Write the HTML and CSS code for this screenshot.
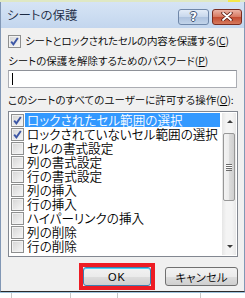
FILE: index.html
```html
<!DOCTYPE html>
<html lang="ja">
<head>
    <meta charset="UTF-8">
    <title>シートの保護</title>
    <link rel="stylesheet" href="styles.css">
</head>
<body>
    <div class="sheet-top"><span class="cell-yellow"></span></div>

    <div class="dialog">
        <div class="titlebar">
            <span class="title">シートの保護</span>
            <div class="caption-btns">
                <span class="cap help">?</span>
                <span class="cap close">
                    <svg width="12" height="9" viewBox="0 0 12 9">
                        <path d="M2 1 L10 8 M10 1 L2 8" stroke="#5a1a10" stroke-width="3.4" stroke-linecap="round"/>
                        <path d="M2 1 L10 8 M10 1 L2 8" stroke="#fff" stroke-width="1.8" stroke-linecap="round"/>
                    </svg>
                </span>
            </div>
        </div>

        <div class="content">
            <div class="check-row">
                <span class="cb checked"><svg viewBox="0 0 11 11"><path d="M2.2 5.6 L4.4 8.4 L8.8 2" stroke="#3d57a6" stroke-width="1.9" fill="none"/></svg></span>
                <span>シートとロックされたセルの内容を保護する(<u>C</u>)</span>
            </div>

            <div class="label">シートの保護を解除するためのパスワード(<u>P</u>)</div>
            <div class="textbox"><span class="caret"></span></div>

            <div class="label">このシートのすべてのユーザーに許可する操作(<u>O</u>):</div>
            <div class="listbox">
                <ul class="items">
                    <li class="selected"><span class="cb checked"><svg viewBox="0 0 11 11"><path d="M2.2 5.6 L4.4 8.4 L8.8 2" stroke="#3d57a6" stroke-width="1.9" fill="none"/></svg></span><span class="text">ロックされたセル範囲の選択</span></li>
                    <li><span class="cb checked"><svg viewBox="0 0 11 11"><path d="M2.2 5.6 L4.4 8.4 L8.8 2" stroke="#3d57a6" stroke-width="1.9" fill="none"/></svg></span><span class="text">ロックされていないセル範囲の選択</span></li>
                    <li><span class="cb"></span><span class="text">セルの書式設定</span></li>
                    <li><span class="cb"></span><span class="text">列の書式設定</span></li>
                    <li><span class="cb"></span><span class="text">行の書式設定</span></li>
                    <li><span class="cb"></span><span class="text">列の挿入</span></li>
                    <li><span class="cb"></span><span class="text">行の挿入</span></li>
                    <li><span class="cb"></span><span class="text">ハイパーリンクの挿入</span></li>
                    <li><span class="cb"></span><span class="text">列の削除</span></li>
                    <li><span class="cb"></span><span class="text">行の削除</span></li>
                </ul>
                <div class="scrollbar">
                    <div class="arrow up"></div>
                    <div class="track">
                        <div class="thumb"><span class="grip"></span></div>
                    </div>
                    <div class="arrow down"></div>
                </div>
            </div>

            <div class="buttons">
                <div class="highlight-box"><span class="btn default">OK</span></div>
                <span class="btn">キャンセル</span>
            </div>
        </div>
    </div>

    <div class="sheet-bottom"></div>
</body>
</html>
```

FILE: styles.css
```css
body {
    margin: 0;
    width: 245px;
    height: 298px;
    overflow: hidden;
    background-color: #fff;
    font-family: "Noto Sans CJK JP", sans-serif;
    font-size: 10.5px;
    font-weight: 350;
    font-feature-settings: "palt";
    color: #000;
    white-space: nowrap;
}
/* spreadsheet showing behind the dialog */
.sheet-top {
    height: 2px;
    background: #dfe8c4;
    position: relative;
}
.cell-yellow {
    position: absolute;
    left: 228px;
    top: 0;
    width: 12px;
    height: 2px;
    background: #f4e84a;
}
.sheet-bottom {
    height: 6px;
    border-top: 1px solid #9ec3dc;
    background: linear-gradient(90deg, transparent 11px, #c8c8c8 11px, #c8c8c8 12px, transparent 12px,
        transparent 70px, #c8c8c8 70px, #c8c8c8 71px, transparent 71px,
        transparent 117px, #c8c8c8 117px, #c8c8c8 118px, transparent 118px,
        transparent 200px, #c8c8c8 200px, #c8c8c8 201px, transparent 201px);
}
/* Dialog frame */
.dialog {
    width: 243px;
    height: 289px;
    border-left: 1px solid #8197b5;
    border-right: 1px solid #8197b5;
    border-bottom: 1px solid #2a2a2a;
    background-color: #f0f0f0;
    display: flex;
    flex-direction: column;
}
.titlebar {
    height: 26px;
    flex: none;
    display: flex;
    align-items: center;
    justify-content: space-between;
    background: linear-gradient(#d6e4f5, #c3d6ee);
    padding: 0 2px 0 6px;
}
.title {
    font-size: 12.5px;
    color: #1b2b44;
    margin-top: -1px;
}
.caption-btns {
    display: flex;
    gap: 3px;
    margin-top: 3px;
}
.cap {
    height: 14px;
    border-radius: 3px;
    display: flex;
    align-items: center;
    justify-content: center;
}
.help {
    width: 29px;
    border: 1px solid #6f87a9;
    background: linear-gradient(#e3ecf7, #c7d7ec 50%, #adc2de 51%, #c2d4ea);
    color: #fff;
    font-family: "DejaVu Sans", sans-serif;
    font-weight: bold;
    font-size: 12px;
    text-shadow: 1px 0 #3d5473, -1px 0 #3d5473, 0 1px #3d5473, 0 -1px #3d5473;
}
.close {
    width: 28px;
    border: 1px solid #7b2c1f;
    background: linear-gradient(#ebb3a5, #d7775f 50%, #c24a30 51%, #d67a5d);
}
/* Dialog body */
.content {
    padding: 6px 6px 0 7px;
    display: flex;
    flex-direction: column;
}
.check-row {
    display: flex;
    align-items: center;
    gap: 4px;
    height: 14px;
    line-height: 14px;
    letter-spacing: -0.25px;
}
.cb {
    width: 11px;
    height: 11px;
    flex: none;
    border: 1px solid #8e8f8f;
    background: linear-gradient(135deg, #d4d4d4, #f8f8f8);
    box-shadow: inset 0 0 0 1px #f2f2f2;
    display: flex;
}
.cb svg {
    width: 11px;
    height: 11px;
}
.label {
    margin-top: 6px;
    height: 14px;
    line-height: 14px;
}
.textbox {
    margin-top: 2px;
    width: 227px;
    height: 16px;
    border: 1px solid #abadb3;
    border-top-color: #8e9198;
    background: #fff;
    position: relative;
}
.caret {
    position: absolute;
    left: 3px;
    top: 2px;
    width: 1px;
    height: 12px;
    background: #000;
}
.textbox + .label {
    margin-top: 5px;
}
/* List of permissions */
.listbox {
    margin-top: 4px;
    width: 228px;
    height: 144px;
    border: 1px solid #828790;
    background: #fff;
    display: flex;
}
.items {
    list-style: none;
    margin: 0;
    padding: 1px 0 0 0;
    flex: 1;
    font-size: 12.6px;
}
.items li {
    height: 14px;
    line-height: 14px;
    display: flex;
    align-items: center;
    padding-left: 2px;
}
.items .text {
    margin-left: 1px;
    padding: 0 2px;
    height: 14px;
    flex: 1;
}
.items li.selected .text {
    background: #3399ff;
    color: #fff;
}
.scrollbar {
    width: 16px;
    margin: 1px 1px 1px 2px;
    background: linear-gradient(90deg, #e6e6e6, #f4f4f4 30%, #f4f4f4 70%, #e8e8e8);
    display: flex;
    flex-direction: column;
}
.arrow {
    height: 17px;
    position: relative;
}
.arrow::after {
    content: "";
    position: absolute;
    left: 5px;
    border-left: 3.5px solid transparent;
    border-right: 3.5px solid transparent;
}
.arrow.up::after {
    top: 7px;
    border-bottom: 3px solid #3c3c3c;
}
.arrow.down::after {
    top: 7px;
    border-top: 3px solid #3c3c3c;
}
.track {
    flex: 1;
    padding: 3px 1px 0 1px;
}
.thumb {
    height: 66px;
    border: 1px solid #979797;
    border-radius: 2px;
    background: linear-gradient(90deg, #f3f3f3, #ececec 50%, #dcdcdc 51%, #cfcfcf);
    display: flex;
    align-items: center;
    justify-content: center;
}
.grip {
    width: 6px;
    height: 5px;
    border-top: 1px solid #6b6b6b;
    border-bottom: 1px solid #6b6b6b;
    background: linear-gradient(#fff 0 1px, #6b6b6b 1px 2px, #fff 2px 3px, #6b6b6b 3px 4px, transparent 4px);
}
/* Buttons */
.buttons {
    margin-top: 6px;
    display: flex;
    justify-content: flex-end;
    align-items: center;
    gap: 10px;
}
.highlight-box {
    border: 4px solid #ed1c24;
    display: flex;
}
.btn {
    height: 17px;
    border: 1px solid #707070;
    border-radius: 3px;
    background: linear-gradient(#f2f2f2, #ebebeb 50%, #dddddd 51%, #cfcfcf);
    display: flex;
    align-items: center;
    justify-content: center;
    font-size: 11.5px;
    width: 71px;
}
.btn.default {
    width: 66px;
    border-color: #3c7fb1;
    box-shadow: inset 0 1px 0 #48d4f8;
    font-family: "Liberation Sans", sans-serif;
    font-size: 11px;
    letter-spacing: 1px;
}
```
